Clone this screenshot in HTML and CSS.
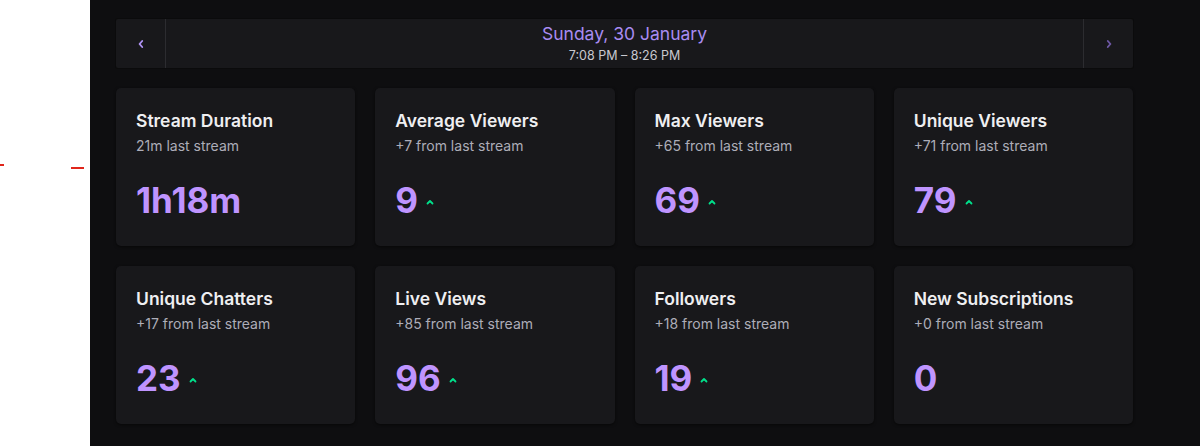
FILE: index.html
```html
<!DOCTYPE html>
<html lang="en">
<head>
<meta charset="utf-8">
<title>Stream stats</title>
<link rel="stylesheet" href="styles.css">
</head>
<body>
<div class="layout">
  <aside class="side">
    <span class="mark mark-a"></span>
    <span class="mark mark-b"></span>
  </aside>
  <main class="main">
    <div class="content">
      <div class="datebar">
        <button class="nav nav-prev" aria-label="Previous stream">
          <svg width="8" height="10" viewBox="0 0 8 10"><path d="M5.2 2 L2.6 5 L5.2 8" fill="none" stroke="currentColor" stroke-width="1.9" stroke-linecap="round" stroke-linejoin="round"/></svg>
        </button>
        <div class="date">
          <div class="date-day">Sunday, 30 January</div>
          <div class="date-time">7:08 PM – 8:26 PM</div>
        </div>
        <button class="nav nav-next" aria-label="Next stream">
          <svg width="8" height="10" viewBox="0 0 8 10"><path d="M2.8 2 L5.4 5 L2.8 8" fill="none" stroke="currentColor" stroke-width="1.9" stroke-linecap="round" stroke-linejoin="round"/></svg>
        </button>
      </div>
      <div class="grid">
        <div class="card">
          <div class="card-title">Stream Duration</div>
          <div class="card-sub">21m last stream</div>
          <div class="card-value"><span>1h18m</span></div>
        </div>
        <div class="card">
          <div class="card-title">Average Viewers</div>
          <div class="card-sub">+7 from last stream</div>
          <div class="card-value"><span>9</span><svg class="up" width="8" height="6" viewBox="0 0 8 6"><path d="M1.5 4.5 L4 2 L6.5 4.5" fill="none" stroke="currentColor" stroke-width="1.8" stroke-linecap="round" stroke-linejoin="round"/></svg></div>
        </div>
        <div class="card">
          <div class="card-title">Max Viewers</div>
          <div class="card-sub">+65 from last stream</div>
          <div class="card-value"><span>69</span><svg class="up" width="8" height="6" viewBox="0 0 8 6"><path d="M1.5 4.5 L4 2 L6.5 4.5" fill="none" stroke="currentColor" stroke-width="1.8" stroke-linecap="round" stroke-linejoin="round"/></svg></div>
        </div>
        <div class="card">
          <div class="card-title">Unique Viewers</div>
          <div class="card-sub">+71 from last stream</div>
          <div class="card-value"><span>79</span><svg class="up" width="8" height="6" viewBox="0 0 8 6"><path d="M1.5 4.5 L4 2 L6.5 4.5" fill="none" stroke="currentColor" stroke-width="1.8" stroke-linecap="round" stroke-linejoin="round"/></svg></div>
        </div>
        <div class="card">
          <div class="card-title">Unique Chatters</div>
          <div class="card-sub">+17 from last stream</div>
          <div class="card-value"><span>23</span><svg class="up" width="8" height="6" viewBox="0 0 8 6"><path d="M1.5 4.5 L4 2 L6.5 4.5" fill="none" stroke="currentColor" stroke-width="1.8" stroke-linecap="round" stroke-linejoin="round"/></svg></div>
        </div>
        <div class="card">
          <div class="card-title">Live Views</div>
          <div class="card-sub">+85 from last stream</div>
          <div class="card-value"><span>96</span><svg class="up" width="8" height="6" viewBox="0 0 8 6"><path d="M1.5 4.5 L4 2 L6.5 4.5" fill="none" stroke="currentColor" stroke-width="1.8" stroke-linecap="round" stroke-linejoin="round"/></svg></div>
        </div>
        <div class="card">
          <div class="card-title">Followers</div>
          <div class="card-sub">+18 from last stream</div>
          <div class="card-value"><span>19</span><svg class="up" width="8" height="6" viewBox="0 0 8 6"><path d="M1.5 4.5 L4 2 L6.5 4.5" fill="none" stroke="currentColor" stroke-width="1.8" stroke-linecap="round" stroke-linejoin="round"/></svg></div>
        </div>
        <div class="card">
          <div class="card-title">New Subscriptions</div>
          <div class="card-sub">+0 from last stream</div>
          <div class="card-value"><span>0</span></div>
        </div>
      </div>
    </div>
  </main>
</div>
</body>
</html>
```

FILE: styles.css
```css
* { box-sizing: border-box; }
html, body { margin: 0; padding: 0; }
body {
  font-family: Inter, "Noto Sans", "Liberation Sans", sans-serif;
  background: #ffffff;
  height: 446px;
  overflow: hidden;
}
.layout {
  display: flex;
  height: 446px;
}
.side {
  width: 90px;
  flex: none;
  background: #ffffff;
  position: relative;
}
.mark {
  position: absolute;
  height: 2px;
  background: #e0261b;
}
.mark-a { left: 0; top: 164px; width: 4px; }
.mark-b { left: 71px; top: 167px; width: 13px; }

.main {
  flex: 1;
  background: #0e0e10;
  padding: 19px 67px 0 26px;
}
.content {
  display: flex;
  flex-direction: column;
  gap: 20px;
}
.datebar {
  display: flex;
  height: 49px;
  background: #18181b;
  border-radius: 2px;
  box-shadow: 0 0 0 1px #0b0b0c;
}
.nav {
  width: 50px;
  flex: none;
  background: transparent;
  border: 0;
  padding: 0;
  display: flex;
  align-items: center;
  justify-content: center;
  cursor: pointer;
}
.nav-prev { border-right: 1px solid #2c2c30; color: #b093f5; }
.nav-next { border-left: 1px solid #2c2c30; color: #6e58a6; }
.date {
  flex: 1;
  display: flex;
  flex-direction: column;
  align-items: center;
  justify-content: center;
}
.date-day {
  color: #a98cf2;
  font-size: 17.5px;
  line-height: 22px;
}
.date-time {
  color: #c8c8cf;
  font-size: 12.5px;
  line-height: 18px;
  margin-top: 2px;
}
.grid {
  display: grid;
  grid-template-columns: repeat(4, 1fr);
  gap: 20px;
}
.card {
  background: #18181b;
  border-radius: 5px;
  padding: 21px 20px 26px;
  box-shadow: 0 1px 3px rgba(0, 0, 0, 0.55);
}
.card-title {
  color: #efeff1;
  font-size: 17.5px;
  font-weight: 600;
  line-height: 24px;
}
.card-sub {
  color: #adadb8;
  font-size: 14px;
  line-height: 22px;
  margin-top: 2px;
}
.card-value {
  margin-top: 23px;
  display: flex;
  align-items: center;
  gap: 8px;
  height: 40px;
}
.card-value span {
  color: #bf94ff;
  font-size: 35px;
  font-weight: 700;
  line-height: 40px;
}
.up {
  color: #00e08b;
  margin-top: 3px;
}
```
